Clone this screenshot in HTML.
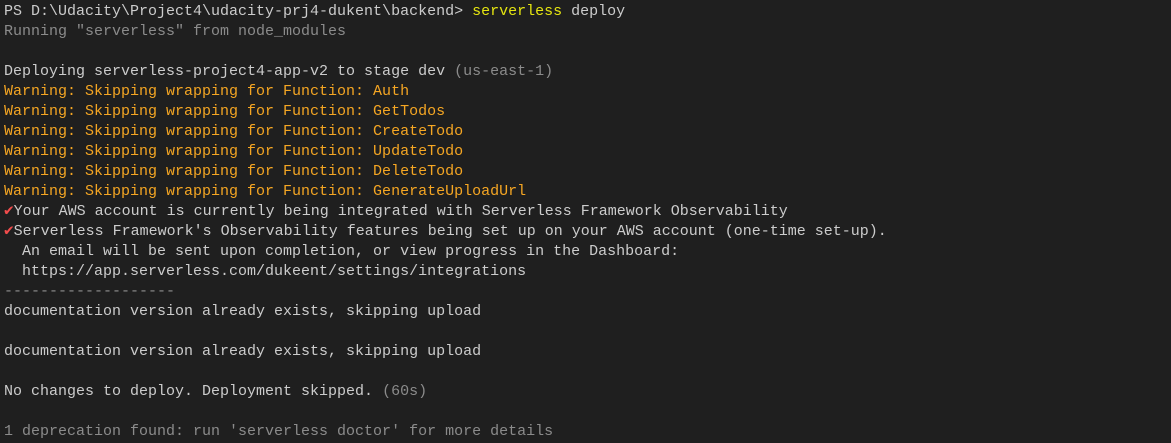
<!DOCTYPE html>
<html><head><style>
html,body{margin:0;padding:0;background:#1f1f1f;width:1171px;height:443px;overflow:hidden}
pre{margin:0;padding:2px 0 0 4px;font-family:"Liberation Mono",monospace;font-size:15px;line-height:20px;color:#cccccc}
.g{color:#8b8b8b}.o{color:#f5a623}.y{color:#e5e510}.r{color:#f14c4c;font-weight:bold;font-size:16px;line-height:15px}
</style></head><body><pre>PS D:\Udacity\Project4\udacity-prj4-dukent\backend> <span class="y">serverless</span> deploy
<span class="g">Running "serverless" from node_modules</span>

Deploying serverless-project4-app-v2 to stage dev <span class="g">(us-east-1)</span>
<span class="o">Warning: Skipping wrapping for Function: Auth</span>
<span class="o">Warning: Skipping wrapping for Function: GetTodos</span>
<span class="o">Warning: Skipping wrapping for Function: CreateTodo</span>
<span class="o">Warning: Skipping wrapping for Function: UpdateTodo</span>
<span class="o">Warning: Skipping wrapping for Function: DeleteTodo</span>
<span class="o">Warning: Skipping wrapping for Function: GenerateUploadUrl</span>
<span class="r">✔</span>Your AWS account is currently being integrated with Serverless Framework Observability
<span class="r">✔</span>Serverless Framework's Observability features being set up on your AWS account (one-time set-up).
  An email will be sent upon completion, or view progress in the Dashboard:
  https://app.serverless.com/dukeent/settings/integrations
<span class="g">-------------------</span>
documentation version already exists, skipping upload

documentation version already exists, skipping upload

No changes to deploy. Deployment skipped. <span class="g">(60s)</span>

<span class="g">1 deprecation found: run 'serverless doctor' for more details</span></pre></body></html>
